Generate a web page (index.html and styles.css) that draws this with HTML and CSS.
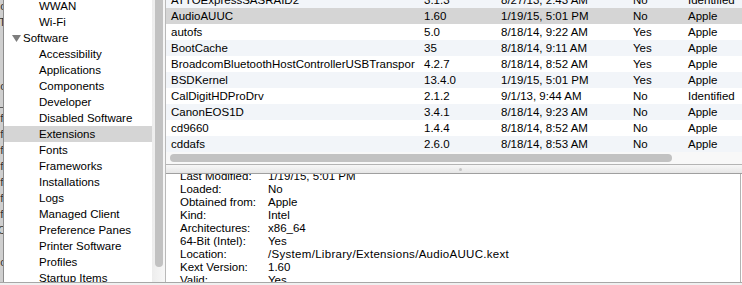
FILE: index.html
```html
<!DOCTYPE html>
<html>
<head>
<meta charset="utf-8">
<link rel="stylesheet" href="styles.css">
</head>
<body>
<div class="window">
  <div class="behind">
    <div class="frag">c</div><div class="frag">T</div><div class="frag">l</div><div class="frag">l</div><div class="frag">l</div><div class="frag">c</div><div class="frag">_</div><div class="frag">fi</div><div class="frag">fi</div><div class="frag">fi</div><div class="frag">fi</div><div class="frag">fi</div><div class="frag">fi</div><div class="frag">fi</div><div class="frag">C</div><div class="frag">:</div><div class="frag">c</div><div class="frag"> </div>
  </div>
  <div class="sidebar">
    <div class="sb-list">
      <div class="sb-item">WWAN</div>
      <div class="sb-item">Wi-Fi</div>
      <div class="sb-group"><svg class="disclosure" width="9" height="7" viewBox="0 0 9 7"><polygon points="0,0 9,0 4.5,7" fill="#7d7d7d"/></svg><span>Software</span></div>
      <div class="sb-item">Accessibility</div>
      <div class="sb-item">Applications</div>
      <div class="sb-item">Components</div>
      <div class="sb-item">Developer</div>
      <div class="sb-item">Disabled Software</div>
      <div class="sb-item selected">Extensions</div>
      <div class="sb-item">Fonts</div>
      <div class="sb-item">Frameworks</div>
      <div class="sb-item">Installations</div>
      <div class="sb-item">Logs</div>
      <div class="sb-item">Managed Client</div>
      <div class="sb-item">Preference Panes</div>
      <div class="sb-item">Printer Software</div>
      <div class="sb-item">Profiles</div>
      <div class="sb-item">Startup Items</div>
    </div>
  </div>
  <div class="vscroll"><div class="vthumb"></div></div>
  <div class="main">
    <div class="table">
      <div class="rows">
        <div class="row alt"><span>ATTOExpressSASRAID2</span><span>3.1.3</span><span>8/27/13, 2:43 AM</span><span>No</span><span>Identified</span></div>
        <div class="row selected"><span>AudioAUUC</span><span>1.60</span><span>1/19/15, 5:01 PM</span><span>No</span><span>Apple</span></div>
        <div class="row"><span>autofs</span><span>5.0</span><span>8/18/14, 9:22 AM</span><span>Yes</span><span>Apple</span></div>
        <div class="row alt"><span>BootCache</span><span>35</span><span>8/18/14, 9:11 AM</span><span>Yes</span><span>Apple</span></div>
        <div class="row"><span>BroadcomBluetoothHostControllerUSBTranspor</span><span>4.2.7</span><span>8/18/14, 8:52 AM</span><span>Yes</span><span>Apple</span></div>
        <div class="row alt"><span>BSDKernel</span><span>13.4.0</span><span>1/19/15, 5:01 PM</span><span>Yes</span><span>Apple</span></div>
        <div class="row"><span>CalDigitHDProDrv</span><span>2.1.2</span><span>9/1/13, 9:44 AM</span><span>No</span><span>Identified</span></div>
        <div class="row alt"><span>CanonEOS1D</span><span>3.4.1</span><span>8/18/14, 9:23 AM</span><span>No</span><span>Apple</span></div>
        <div class="row"><span>cd9660</span><span>1.4.4</span><span>8/18/14, 8:52 AM</span><span>No</span><span>Apple</span></div>
        <div class="row alt"><span>cddafs</span><span>2.6.0</span><span>8/18/14, 8:53 AM</span><span>No</span><span>Apple</span></div>
      </div>
    </div>
    <div class="hscroll"><div class="hthumb"></div></div>
    <div class="splitter"><div class="dimple"></div></div>
    <div class="detail">
      <div class="props">
        <span class="label">Last Modified:</span><span>1/19/15, 5:01 PM</span>
        <span class="label">Loaded:</span><span>No</span>
        <span class="label">Obtained from:</span><span>Apple</span>
        <span class="label">Kind:</span><span>Intel</span>
        <span class="label">Architectures:</span><span>x86_64</span>
        <span class="label">64-Bit (Intel):</span><span>Yes</span>
        <span class="label">Location:</span><span class="path">/System/Library/Extensions/AudioAUUC.kext</span>
        <span class="label">Kext Version:</span><span>1.60</span>
        <span class="label">Valid:</span><span>Yes</span>
      </div>
    </div>
  </div>
</div>
</body>
</html>
```
FILE: styles.css
```css
html, body {
  margin: 0;
  padding: 0;
}
body {
  width: 742px;
  height: 285px;
  overflow: hidden;
  background: #f0f0f0;
  font-family: "Liberation Sans", Arial, sans-serif;
  font-size: 11.5px;
  color: #000;
}
.window {
  display: flex;
  height: 282px;
  border-bottom: 1px solid #a7a7a7;
  background: #fff;
}
.behind {
  width: 3px;
  flex: none;
  background: #cfcfcf;
  border-right: 1px solid #8c8c8c;
  overflow: hidden;
  display: flex;
  flex-direction: column;
  align-items: flex-end;
  margin-top: -2px;
}
.frag {
  height: 16px;
  line-height: 16px;
  margin-right: -3px;
  color: #333;
  white-space: pre;
}
.sidebar {
  width: 148px;
  flex: none;
  overflow: hidden;
  background: #fff;
}
.sb-list {
  margin-top: -2px;
}
.sb-item, .sb-group {
  height: 16px;
  line-height: 16px;
  white-space: nowrap;
}
.sb-item {
  padding-left: 35px;
}
.sb-item.selected {
  background: #d5d5d5;
}
.sb-group {
  display: flex;
  align-items: center;
  padding-left: 8px;
}
.disclosure {
  margin-right: 2px;
  margin-top: 1px;
}
.vscroll {
  width: 10px;
  flex: none;
  padding-left: 3px;
  background: linear-gradient(to right, #ededed, #f7f7f7);
  border-right: 1px solid #b9b9b9;
  overflow: hidden;
}
.vthumb {
  width: 8px;
  height: 272px;
  margin-top: -5px;
  border-radius: 4px;
  background: #c2c2c2;
}
.main {
  flex: 1;
  display: flex;
  flex-direction: column;
  min-width: 0;
}
.table {
  height: 152px;
  overflow: hidden;
  flex: none;
}
.rows {
  margin-top: -8px;
}
.row {
  display: grid;
  grid-template-columns: 254px 77px 132px 55px 1fr;
  height: 16px;
  line-height: 16px;
  white-space: nowrap;
}
.row span {
  padding-left: 4px;
  overflow: hidden;
}
.row span:first-child {
  padding-left: 5px;
}
.row.alt {
  background: #f2f5f9;
}
.row.selected {
  background: #d5d5d5;
}
.hscroll {
  height: 12px;
  flex: none;
  background: #f8f8f8;
  border-bottom: 1px solid #b4b4b4;
  display: flex;
  align-items: center;
  padding-left: 4px;
}
.hthumb {
  width: 502px;
  height: 8px;
  border-radius: 4px;
  background: #c2c2c2;
}
.splitter {
  height: 8px;
  flex: none;
  background: linear-gradient(#f7f7f7, #e6e6e6);
  border-bottom: 1px solid #9f9f9f;
  display: flex;
  align-items: center;
}
.dimple {
  width: 3px;
  height: 3px;
  border-radius: 50%;
  background: #c4c4c4;
  margin-left: 293px;
}
.detail {
  flex: 1;
  overflow: hidden;
  border-right: 1px solid #b2b2b2;
  margin-right: 1px;
  padding-left: 14px;
  background: #fff;
}
.props {
  display: grid;
  grid-template-columns: 88px 1fr;
  line-height: 13px;
  margin-top: -4px;
  white-space: nowrap;
}
.path {
  letter-spacing: 0.3px;
}
```
